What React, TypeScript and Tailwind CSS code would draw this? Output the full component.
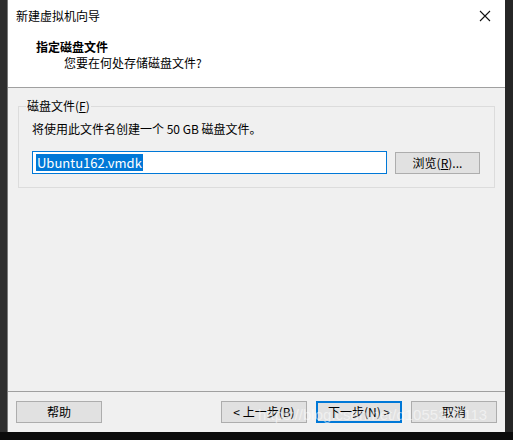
import React from 'react';

const font = { fontFamily: '"Noto Sans CJK SC", "Noto Sans", sans-serif' };

const Btn: React.FC<{ label: React.ReactNode; primary?: boolean }> = ({ label, primary }) => (
  <div
    className={`w-[86px] h-[22px] flex items-center justify-center bg-[#e1e1e1] text-[12px] text-black ${
      primary ? 'border-2 border-[#0078d7]' : 'border border-[#adadad]'
    }`}
  >
    {label}
  </div>
);

export default function App() {
  return (
    <div className="w-[513px] h-[440px] bg-[#0b0b0b] flex flex-col overflow-hidden" style={font}>
      <div className="flex h-[432px]">
        <div className="w-[7px] bg-[#2e2e2e]" />
        <div className="w-[498px] flex flex-col border-l border-[#7a7a7a] bg-[#f0f0f0] relative overflow-hidden">
          {/* header */}
          <div className="h-[88px] bg-white border-b border-[#a0a0a0] flex flex-col shrink-0">
            <div className="h-[31px] flex items-center justify-between pl-[8px] pr-[10px]">
              <span className="text-[12px] text-black leading-none">新建虚拟机向导</span>
              <svg width="12" height="12" viewBox="0 0 12 12" className="mr-[4px]">
                <path d="M1 1 L11 11 M11 1 L1 11" stroke="#111" strokeWidth="1.1" />
              </svg>
            </div>
            <div className="pl-[28px] text-[12px] font-bold text-black leading-[16px] mt-[8px]">指定磁盘文件</div>
            <div className="pl-[56px] text-[12px] text-black leading-[16px]">您要在何处存储磁盘文件?</div>
          </div>

          {/* body */}
          <div className="flex-1 flex flex-col">
            <div className="mt-[18px] ml-[10px] mr-[10px] h-[82px] border border-[#dcdcdc] relative flex flex-col">
              <span className="absolute -top-[9px] left-[7px] bg-[#f0f0f0] px-[1px] text-[12px] leading-[16px] text-black">
                磁盘文件(<span className="underline">F</span>)
              </span>
              <div className="mt-[14px] ml-[13px] text-[12px] leading-[16px] text-black">
                将使用此文件名创建一个 50 GB 磁盘文件。
              </div>
              <div className="mt-[14px] ml-[13px] flex items-center gap-[8px]">
                <div className="w-[355px] h-[23px] bg-white border border-[#0078d7] flex items-center pl-[3px]">
                  <span className="bg-[#0078d7] text-white text-[13px] leading-[17px] px-[1px]">Ubuntu162.vmdk</span>
                </div>
                <div className="w-[85px] h-[22px] flex items-center justify-center bg-[#e1e1e1] border border-[#adadad] text-[12px] text-black">
                  浏览(<span className="underline">R</span>)...
                </div>
              </div>
            </div>
          </div>

          {/* footer */}
          <div className="h-[41px] border-t border-[#a0a0a0] flex items-start pt-[9px] px-[8px] shrink-0">
            <Btn label="帮助" />
            <div className="flex-1" />
            <div className="flex gap-[9px]">
              <Btn label="< 上一步(B)" />
              <Btn label="下一步(N) >" primary />
              <Btn label="取消" />
            </div>
          </div>

          <span
            className="absolute left-[250px] top-[407px] text-[15px] text-white/50 leading-none pointer-events-none whitespace-nowrap"
            style={{ fontFamily: '"Liberation Sans", Arial, sans-serif' }}
          >
            https://blog.csdn.net/q1055387113
          </span>
        </div>
        <div className="flex-1 bg-[#262626]" />
      </div>
    </div>
  );
}
